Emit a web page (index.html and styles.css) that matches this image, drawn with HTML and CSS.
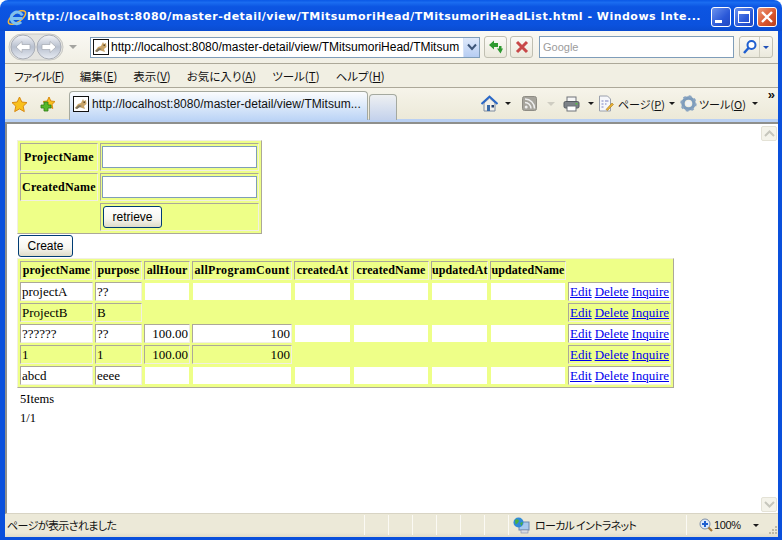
FILE: index.html
```html
<!DOCTYPE html>
<html lang="ja">
<head>
<meta charset="utf-8">
<title>TMitsumoriHeadList</title>
<link rel="stylesheet" href="styles.css">
</head>
<body>
<svg class="defs" width="0" height="0" aria-hidden="true">
  <symbol id="tomcat" viewBox="0 0 16 16">
    <rect x=".5" y=".5" width="15" height="15" fill="#fff" stroke="#111"/>
    <path d="M2 12 L5 8 L8 7 L10 3 L11 5 L13 4 L13.5 8 L11 10 L12 13 L9 12 L6 11 L4 13 Z" fill="#c9a468"/>
    <path d="M2 12 L6 9 L9 10 L7 11 L4 13 Z" fill="#7d7460"/>
    <path d="M10.500 5.500 h1.500 v1.500 h-1.500z" fill="#5d4a28"/>
  </symbol>
</svg>
<div class="window">
  <header class="titlebar">
    <svg class="ie-logo" width="20" height="20" viewBox="0 0 20 20">
      <ellipse cx="10" cy="10.500" rx="10" ry="4.500" transform="rotate(-35 10 10.500)" fill="none" stroke="#f1b73c" stroke-width="1.500"/>
      <path d="M4.500 11.500 h11 M15.300 8.500 a5.800 5.800 0 1 0 -1.200 6.500" fill="none" stroke="#7cc0f2" stroke-width="3"/>
    </svg>
    <div class="title-text">http://localhost:8080/master-detail/view/TMitsumoriHead/TMitsumoriHeadList.html - Windows Inte...</div>
    <div class="win-buttons">
      <div class="win-btn"><span class="glyph-min"></span></div>
      <div class="win-btn"><span class="glyph-max"></span></div>
      <div class="win-btn win-close">
        <svg width="14" height="14" viewBox="0 0 14 14"><path d="M2 2 L12 12 M12 2 L2 12" stroke="#fff" stroke-width="2.400"/></svg>
      </div>
    </div>
  </header>
  <div class="frame">
    <div class="addr-row">
      <svg class="nav" width="56" height="28" viewBox="0 0 56 28">
        <defs>
          <linearGradient id="navg" x1="0" y1="0" x2="0" y2="1"><stop offset="0" stop-color="#f4f5f8"/><stop offset=".5" stop-color="#b8c0cf"/><stop offset="1" stop-color="#e8ecf3"/></linearGradient>
        </defs>
        <rect x="1" y="1" width="54" height="26" rx="13" fill="#e4e4e0" stroke="#c8c8c4"/>
        <circle cx="15" cy="14" r="12" fill="url(#navg)" stroke="#a9adb6"/>
        <circle cx="41" cy="14" r="12" fill="url(#navg)" stroke="#a9adb6"/>
        <path d="M8 14 L14 8.500 V11.500 H22 V16.500 H14 V19.500 Z" fill="#fff" stroke="#a4a8b0" stroke-width=".7"/>
        <path d="M48 14 L42 8.500 V11.500 H34 V16.500 H42 V19.500 Z" fill="#fff" stroke="#a4a8b0" stroke-width=".7"/>
      </svg>
      <span class="caret caret-gray nav-caret"></span>
      <div class="addr-box">
        <svg class="fav" width="16" height="16"><use href="#tomcat"/></svg>
        <span class="addr-text">http://localhost:8080/master-detail/view/TMitsumoriHead/TMitsum</span>
        <span class="addr-drop"><svg width="10" height="8" viewBox="0 0 10 8"><path d="M1 1.500 L5 6 L9 1.500" fill="none" stroke="#3d5578" stroke-width="2"/></svg></span>
      </div>
      <div class="tool-btn refresh-btn">
        <svg width="16" height="16" viewBox="0 0 16 16"><path d="M1 6 L6 1.500 V4 H10 V8 H6 V10.500 Z" fill="#2e9a30"/><path d="M15 9.500 L12.500 14.500 L9 9.500 H11 V7 H13.500 V9.500 Z" fill="#2e9a30"/></svg>
      </div>
      <div class="tool-btn stop-btn">
        <svg width="14" height="14" viewBox="0 0 14 14"><path d="M2 2 L12 12 M12 2 L2 12" stroke="#c84848" stroke-width="3"/></svg>
      </div>
      <div class="search-box">Google</div>
      <div class="search-btn">
        <span class="search-main"><svg width="16" height="16" viewBox="0 0 16 16"><circle cx="9.500" cy="6" r="4" fill="#fff" stroke="#1f5fd0" stroke-width="2"/><path d="M6.500 9 L2 14" stroke="#1f5fd0" stroke-width="2.500"/></svg></span>
        <span class="search-more"><span class="caret caret-blue"></span></span>
      </div>
    </div>
    <nav class="menu-row">
      <span class="menu-item menu-first">ファイル(<u>F</u>)</span>
      <span class="menu-item">編集(<u>E</u>)</span>
      <span class="menu-item">表示(<u>V</u>)</span>
      <span class="menu-item">お気に入り(<u>A</u>)</span>
      <span class="menu-item">ツール(<u>T</u>)</span>
      <span class="menu-item">ヘルプ(<u>H</u>)</span>
    </nav>
    <div class="tab-row">
      <svg class="star" width="17" height="17" viewBox="0 0 17 17"><path d="M8.500 1 L10.800 6 L16 6.600 L12.200 10.200 L13.300 15.600 L8.500 12.900 L3.700 15.600 L4.800 10.200 L1 6.600 L6.200 6 Z" fill="#f8c01c" stroke="#d98a10"/></svg>
      <svg class="star-add" width="16" height="16" viewBox="0 0 16 16"><path d="M9 1 L10.800 5 L15 5.500 L12 8.400 L12.800 12.500 L9 10.400 L5.200 12.500 L6 8.400 L3 5.500 L7.200 5 Z" fill="#f8c01c" stroke="#d98a10"/><path d="M1 9 H4 V6 H8 V9 H11 V12 H8 V15 H4 V12 H1 Z" fill="#55b82a" stroke="#2d7c14" stroke-width=".8"/></svg>
      <div class="tab tab-active">
        <svg class="fav" width="16" height="16"><use href="#tomcat"/></svg>
        <span class="tab-text">http://localhost:8080/master-detail/view/TMitsum...</span>
      </div>
      <div class="tab tab-new"></div>
      <div class="cmd-bar">
        <svg class="cmd-home" width="17" height="17" viewBox="0 0 17 17"><path d="M3 8 V16 H14 V8 L8.500 3 Z" fill="#f2f0ea" stroke="#7f8ca0"/><path d="M0.500 9 L8.500 1.500 L16.500 9" fill="none" stroke="#2a68c8" stroke-width="2"/><rect x="6" y="10" width="3" height="6" fill="#3a6aa8"/><rect x="10.500" y="10" width="2.500" height="2.500" fill="#223f70"/></svg>
        <span class="caret caret-dark cmd-c1"></span>
        <svg class="cmd-rss" width="15" height="15" viewBox="0 0 15 15"><rect x=".5" y=".5" width="14" height="14" rx="2" fill="#a6a49c" stroke="#8e8c84"/><circle cx="4.200" cy="11" r="1.500" fill="#eee"/><path d="M3 6.500 A6 6 0 0 1 9 12.500 M3 3 A9.500 9.500 0 0 1 12.500 12.500" fill="none" stroke="#eee" stroke-width="1.500"/></svg>
        <span class="caret caret-light cmd-c2"></span>
        <svg class="cmd-print" width="17" height="16" viewBox="0 0 17 16"><rect x="4" y="1" width="9" height="5" fill="#f6f6f6" stroke="#6f7378"/><rect x="1" y="5.500" width="15" height="6.500" rx="1.500" fill="#7d8288" stroke="#555a60"/><rect x="4" y="10" width="9" height="5" fill="#fff" stroke="#6f7378"/><rect x="12.500" y="7" width="2" height="1.500" fill="#54c040"/></svg>
        <span class="caret caret-dark cmd-c3"></span>
        <svg class="cmd-page" width="16" height="17" viewBox="0 0 16 17"><path d="M1.500 1 H9.500 L12.500 4 V16 H1.500 Z" fill="#f6f7fa" stroke="#9aa0ac"/><path d="M3.500 6 h2 M7 6 h3.500 M3.500 9 h2 M7 9 h1.500 M3.500 12 h2" stroke="#7a80c0"/><path d="M8 14.500 L14 8 L15.500 9.500 L9.500 15.500 Z" fill="#e8b030" stroke="#a87a20" stroke-width=".6"/></svg>
        <span class="cmd-label cmd-l1">ページ(<u>P</u>)</span>
        <span class="caret caret-dark cmd-c4"></span>
        <svg class="cmd-gear" width="17" height="17" viewBox="0 0 17 17"><circle cx="8.500" cy="8.500" r="5.500" fill="none" stroke="#7d9cbc" stroke-width="3.400"/><circle cx="8.500" cy="8.500" r="7" fill="none" stroke="#8aa4c0" stroke-width="2.400" stroke-dasharray="2.600 2.900"/><circle cx="8.500" cy="8.500" r="2.600" fill="#eef2f6"/></svg>
        <span class="cmd-label cmd-l2">ツール(<u>O</u>)</span>
        <span class="caret caret-dark cmd-c5"></span>
        <span class="chevron">»</span>
      </div>
    </div>
    <div class="main">
      <main class="page">
        <table class="grid search-grid">
          <tr>
            <th class="cell lbl">ProjectName</th>
            <td class="cell fld"><input class="text-input" type="text"></td>
          </tr>
          <tr>
            <th class="cell lbl">CreatedName</th>
            <td class="cell fld"><input class="text-input" type="text"></td>
          </tr>
          <tr>
            <td class="cell blank lbl"></td>
            <td class="cell fld"><button class="btn btn-retrieve" type="button">retrieve</button></td>
          </tr>
        </table>
        <button class="btn btn-create" type="button">Create</button>
        <table class="grid list-grid">
          <tr>
            <th class="cell c1">projectName</th><th class="cell c2">purpose</th><th class="cell c3">allHour</th><th class="cell c4">allProgramCount</th><th class="cell c5">createdAt</th><th class="cell c6">createdName</th><th class="cell c7">updatedAt</th><th class="cell c8">updatedName</th><th class="cell blank c9"></th>
          </tr>
          <tr class="row-white">
            <td class="cell">projectA</td><td class="cell">??</td><td class="cell blank"></td><td class="cell blank"></td><td class="cell blank"></td><td class="cell blank"></td><td class="cell blank"></td><td class="cell blank"></td>
            <td class="cell acts"><a href="#">Edit</a> <a href="#">Delete</a> <a href="#">Inquire</a></td>
          </tr>
          <tr>
            <td class="cell">ProjectB</td><td class="cell">B</td><td class="cell blank"></td><td class="cell blank"></td><td class="cell blank"></td><td class="cell blank"></td><td class="cell blank"></td><td class="cell blank"></td>
            <td class="cell acts"><a href="#">Edit</a> <a href="#">Delete</a> <a href="#">Inquire</a></td>
          </tr>
          <tr class="row-white">
            <td class="cell">??????</td><td class="cell">??</td><td class="cell num">100.00</td><td class="cell num">100</td><td class="cell blank"></td><td class="cell blank"></td><td class="cell blank"></td><td class="cell blank"></td>
            <td class="cell acts"><a href="#">Edit</a> <a href="#">Delete</a> <a href="#">Inquire</a></td>
          </tr>
          <tr>
            <td class="cell">1</td><td class="cell">1</td><td class="cell num">100.00</td><td class="cell num">100</td><td class="cell blank"></td><td class="cell blank"></td><td class="cell blank"></td><td class="cell blank"></td>
            <td class="cell acts"><a href="#">Edit</a> <a href="#">Delete</a> <a href="#">Inquire</a></td>
          </tr>
          <tr class="row-white">
            <td class="cell">abcd</td><td class="cell">eeee</td><td class="cell blank"></td><td class="cell blank"></td><td class="cell blank"></td><td class="cell blank"></td><td class="cell blank"></td><td class="cell blank"></td>
            <td class="cell acts"><a href="#">Edit</a> <a href="#">Delete</a> <a href="#">Inquire</a></td>
          </tr>
        </table>
        <p class="note note-first">5Items</p>
        <p class="note">1/1</p>
      </main>
      <aside class="scrollbar">
        <div class="sb-btn"><svg width="11" height="7" viewBox="0 0 11 7"><path d="M1 6 L5.500 1.500 L10 6" fill="none" stroke="#c6c6bc" stroke-width="2"/></svg></div>
        <div class="sb-btn"><svg width="11" height="7" viewBox="0 0 11 7"><path d="M1 1 L5.500 5.500 L10 1" fill="none" stroke="#c6c6bc" stroke-width="2"/></svg></div>
      </aside>
    </div>
    <footer class="status">
      <div class="st-msg">ページが表示されました</div>
      <div class="st-cell"></div><div class="st-cell"></div><div class="st-cell"></div><div class="st-cell"></div><div class="st-cell"></div><div class="st-cell"></div>
      <div class="st-zone">
        <svg width="17" height="17" viewBox="0 0 17 17"><rect x="6" y="5" width="10" height="8" fill="#a8c8ee" stroke="#6a88b0"/><rect x="8" y="13" width="7" height="3" fill="#d8dce4" stroke="#8088a0" stroke-width=".6"/><circle cx="5.500" cy="5.500" r="5" fill="#2f8ad8"/><path d="M2 3 Q5 1 6 4 Q4 8 2.500 7 Z M7 6 L10 5 L8.500 9 Z" fill="#4cb040"/></svg>
        <span class="zone-text">ローカル イントラネット</span>
      </div>
      <div class="st-zoom">
        <svg width="14" height="14" viewBox="0 0 14 14"><circle cx="6" cy="6" r="5" fill="#dfeafa" stroke="#7d8ea8"/><path d="M6 3 V9 M3 6 H9" stroke="#1f5fd0" stroke-width="2"/><path d="M9.500 9.500 L13 13" stroke="#a87838" stroke-width="2.200"/></svg>
        <span class="zoom-text">100%</span>
        <span class="caret caret-dark zoom-caret"></span>
        <svg class="grip" width="10" height="10" viewBox="0 0 10 10"><path d="M7 1h2v2h-2z M4 4h2v2h-2z M7 4h2v2h-2z M1 7h2v2h-2z M4 7h2v2h-2z M7 7h2v2h-2z" fill="#bdb9a6"/></svg>
      </div>
    </footer>
  </div>
</div>
</body>
</html>
```

FILE: styles.css
```css
* { box-sizing: border-box; }
html, body { margin: 0; padding: 0; background: #fff; }
body { width: 784px; height: 542px; overflow: hidden; font-family: "Liberation Serif", serif; }
.defs { position: absolute; }
svg { display: block; flex: none; }

.window { width: 782px; height: 540px; display: flex; flex-direction: column; }

/* Title bar */
.titlebar {
  height: 31px; flex: none; display: flex; align-items: center;
  padding: 0 5px 0 7px; border-radius: 8px 8px 0 0;
  background: linear-gradient(#0a58e6 0, #1a6cf0 8%, #0c55e2 22%, #0b52de 80%, #0a4cd0 100%);
}
.ie-logo { margin-top: 3px; }
.title-text {
  flex: 1; min-width: 0; margin: 3px 0 0 0; color: #fff; white-space: nowrap; overflow: hidden;
  font: bold 11px/16px "DejaVu Sans", sans-serif; letter-spacing: .49px;
}
.win-buttons { display: flex; gap: 3px; margin-top: 3px; margin-left: 7px; }
.win-btn {
  width: 20px; height: 20px; border: 1px solid #fff; border-radius: 3px;
  background: linear-gradient(135deg, #6c93ee, #2a58d8 60%, #2048c0);
  display: flex; align-items: center; justify-content: center; position: relative;
}
.win-close { background: linear-gradient(135deg, #ee9a7a, #d8542c 60%, #b8401c); }
.glyph-min { width: 7px; height: 3px; background: #fff; margin: 9px 6px 0 0; }
.glyph-max { width: 12px; height: 12px; border: 1px solid #fff; border-top-width: 3px; }

.frame {
  flex: 1; min-height: 0; display: flex; flex-direction: column;
  border-left: 5px solid #0a50dc; border-right: 4px solid #0a50dc; border-bottom: 3px solid #0a50dc;
  background: #ece9d8;
}
.addr-row {
  height: 33px; flex: none; display: flex; align-items: center; padding-left: 3px;
  background: linear-gradient(#faf9f4, #f1efe4); border-bottom: 1px solid #aca899;
}
.caret { width: 0; height: 0; flex: none; border-left: 4px solid transparent; border-right: 4px solid transparent; border-top: 4px solid #111; }
.caret-gray { border-top-color: #a4a4a0; }
.caret-blue { border-top-color: #2050b8; border-left-width: 3px; border-right-width: 3px; border-top-width: 3px; }
.caret-light { border-top-color: #cfcdc2; }
.caret-dark { border-top-color: #1a1a1a; border-left-width: 3px; border-right-width: 3px; border-top-width: 3px; }
.nav-caret { margin-left: 5px; }
.addr-box {
  width: 390px; height: 21px; margin-left: 13px; display: flex; align-items: center;
  background: #fff; border: 1px solid #7f9db9; padding-left: 2px;
}
.addr-text { flex: 1; min-width: 0; margin-left: 2px; overflow: hidden; white-space: nowrap; font: 12px/16px "Liberation Sans", sans-serif; color: #000; }
.addr-drop {
  width: 16px; height: 19px; display: flex; align-items: center; justify-content: center;
  background: linear-gradient(#dfe9fb, #b6cdf2); border-left: 1px solid #d5e2f8;
}
.tool-btn {
  width: 23px; height: 22px; display: flex; align-items: center; justify-content: center;
  border: 1px solid #c0bfb2; border-radius: 3px; background: linear-gradient(#fbfaf6, #ebe9dc);
}
.refresh-btn { margin-left: 4px; }
.stop-btn { margin-left: 3px; }
.search-box {
  width: 195px; height: 22px; margin-left: 6px; padding-left: 3px;
  background: #fff; border: 1px solid #7f9db9; color: #9c9c9c;
  font: 11px/20px "Liberation Sans", sans-serif;
}
.search-btn {
  width: 34px; height: 22px; margin-left: 5px; display: flex;
  border: 1px solid #c0bfb2; border-radius: 3px; background: linear-gradient(#fbfaf6, #ebe9dc);
}
.search-main { width: 20px; display: flex; align-items: center; justify-content: center; border-right: 1px solid #cfcdc0; }
.search-more { flex: 1; display: flex; align-items: center; justify-content: center; }

.menu-row {
  height: 24px; flex: none; display: flex; align-items: center; padding: 0 0 0 9px; gap: 16px;
  background: #f1efe3; border-bottom: 1px solid #aca899;
  font: 11.500px/16px "Noto Sans CJK JP", sans-serif; color: #111;
  font-feature-settings: "palt";
}
.menu-item { white-space: nowrap; }
.menu-first { letter-spacing: -.6px; }

.tab-row {
  height: 34px; flex: none; display: flex; align-items: flex-end; position: relative;
  background: linear-gradient(#f6f4ea, #ece9d8); border-bottom: 3px solid #b9d0f3;
}
.star { margin: 0 0 6px 6px; }
.star-add { margin: 0 0 7px 12px; }
.tab { height: 29px; margin-bottom: -1px; border: 1px solid #a5a99f; border-bottom: 0; border-radius: 4px 4px 0 0; }
.tab-active {
  width: 299px; margin-left: 13px; display: flex; align-items: center; padding: 0 0 4px 3px;
  background: linear-gradient(#fbfcfd, #e2edfb 40%, #bcd4f6);
}
.tab-text { margin-left: 3px; white-space: nowrap; overflow: hidden; font: 12px/16px "Liberation Sans", sans-serif; letter-spacing: .04px; color: #111; }
.tab-new { width: 28px; height: 26px; margin-left: 1px; background: linear-gradient(#eef0f2, #c4d2ec); }
.cmd-bar { flex: 1; height: 31px; display: flex; align-items: center; position: relative; }
.cmd-home { margin-left: 84px; }
.cmd-c1 { margin-left: 7px; }
.cmd-rss { margin-left: 11px; }
.cmd-c2 { margin-left: 10px; }
.cmd-print { margin-left: 8px; }
.cmd-c3 { margin-left: 8px; }
.cmd-page { margin-left: 4px; }
.cmd-label { font: 11px/16px "Noto Sans CJK JP", sans-serif; color: #111; white-space: nowrap; font-feature-settings: "palt"; }
.cmd-l1 { margin-left: 4px; }
.cmd-c4 { margin-left: 4px; }
.cmd-gear { margin-left: 5px; }
.cmd-l2 { margin-left: 2px; }
.cmd-c5 { margin-left: 6px; }
.chevron { position: absolute; right: 3px; top: 0; font: bold 13px/14px "Liberation Sans", sans-serif; color: #111; }

/* Page */
.main { flex: 1; min-height: 0; display: flex; background: #fff; border-top: 2px solid #8e8f8c; border-left: 2px solid #8e8f8c; border-bottom: 1px solid #d8d4c4; }
.page { flex: 1; min-width: 0; padding: 16px 0 0 10px; font-size: 13px; line-height: 15px; color: #000; }
.scrollbar { width: 17px; flex: none; padding: 2px 1px 1px 0; display: flex; flex-direction: column; justify-content: space-between; }
.sb-btn {
  width: 16px; height: 15px; display: flex; align-items: center; justify-content: center;
  border: 1px solid #e4e2d6; border-radius: 2px; background: #f4f3ea;
}

.grid {
  border-collapse: separate; border-spacing: 2px; table-layout: fixed;
  background: #eeff88; border: 1px solid; border-color: #f1efe2 #aca899 #aca899 #f1efe2;
}
.cell {
  padding: 1px; border: 1px solid; border-color: #aca899 #f1efe2 #f1efe2 #aca899;
  line-height: 15px; font-size: 13px; text-align: left; white-space: nowrap;
}
th.cell { font-size: 12px; letter-spacing: .1px; font-weight: bold; text-align: center; padding: 1px 0; }
.blank { border-color: #eeff88; }
.num { text-align: right; }
.row-white .cell { background: #fff; }

.search-grid { width: 245px; }
.search-grid .cell { height: 28px; }
.search-grid th.cell { letter-spacing: .25px; }
.lbl { width: 78px; }
.fld { width: 159px; }
.text-input { display: block; width: 155px; height: 22px; margin: 0; padding: 0 2px; background: #fff; border: 1px solid #7f9db9; }

.btn {
  display: block; height: 22px; padding: 0; border: 1px solid #003c74; border-radius: 3px;
  background: linear-gradient(#fff, #f6f5ef 60%, #dedbc8);
  font: 12px/20px "Liberation Sans", sans-serif; color: #000;
}
.btn-retrieve { width: 59px; margin-left: 1px; }
.btn-create { width: 55px; margin: 1px 0 1px 1px; }

.list-grid { width: 657px; }
.c1 { width: 73px; } .c2 { width: 47px; } .c3 { width: 46px; } .c4 { width: 100px; } .c5 { width: 57px; }
.c6 { width: 76px; } .c7 { width: 57px; } .c8 { width: 76px; } .c9 { width: 103px; }
th.c4 { letter-spacing: .3px; }
.acts { word-spacing: -.3px; }
.acts a { color: #0000ee; text-decoration: underline; }

.note { margin: 4px 0 0 3px; font-size: 12.500px; line-height: 15px; }

/* Status bar */
.status {
  height: 23px; flex: none; display: flex; align-items: stretch;
  background: linear-gradient(#ece9d8 80%, #dfdccb); padding: 1px 0 2px 0;
  font: 11px/20px "Noto Sans CJK JP", sans-serif; color: #111; font-feature-settings: "palt";
}
.st-msg { width: 359px; padding-left: 2px; white-space: nowrap; letter-spacing: -.6px; }
.st-cell { width: 24px; border-left: 1px solid #fbfaf4; }
.st-zone { width: 178px; display: flex; align-items: center; padding-left: 4px; border-left: 1px solid #fbfaf4; }
.zone-text { margin-left: 5px; white-space: nowrap; letter-spacing: -.7px; }
.st-zoom { flex: 1; display: flex; align-items: center; padding-left: 12px; border-left: 1px solid #fbfaf4; position: relative; }
.zoom-text { margin-left: 1px; font: 11px/14px "Liberation Sans", sans-serif; letter-spacing: -.4px; }
.zoom-caret { margin-left: 12px; }
.grip { position: absolute; right: 0; bottom: 0; }
```
